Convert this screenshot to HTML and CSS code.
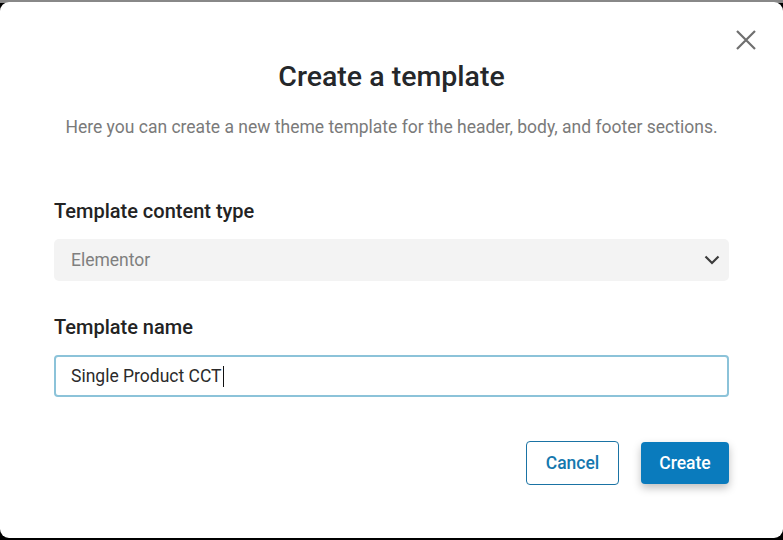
FILE: index.html
```html
<!DOCTYPE html>
<html>
<head>
<meta charset="utf-8">
<title>Create a template</title>
<link rel="stylesheet" href="styles.css">
</head>
<body>
<div class="modal">
  <button class="modal__close" aria-label="Close">
    <svg width="20" height="20" viewBox="0 0 20 20"><path d="M1 1L19 19M19 1L1 19" stroke="#6f6f6f" stroke-width="2.2" fill="none"/></svg>
  </button>
  <h1 class="modal__title">Create a template</h1>
  <p class="modal__text">Here you can create a new theme template for the header, body, and footer sections.</p>

  <div class="field">
    <label class="field__label">Template content type</label>
    <div class="select">
      <span>Elementor</span>
      <svg width="16" height="10" viewBox="0 0 16 10"><path d="M1.5 1.5L8 8L14.5 1.5" stroke="#3c3c3c" stroke-width="2.2" fill="none"/></svg>
    </div>
  </div>

  <div class="field">
    <label class="field__label">Template name</label>
    <div class="input"><span>Single Product CCT</span><i class="caret"></i></div>
  </div>

  <div class="modal__actions">
    <button class="btn btn--ghost">Cancel</button>
    <button class="btn btn--primary">Create</button>
  </div>
</div>
</body>
</html>
```

FILE: styles.css
```css
*,
*::before,
*::after {
  box-sizing: border-box;
}

html, body {
  height: 100%;
}

body {
  margin: 0;
  padding-top: 2px;
  background: linear-gradient(#888 0 3px, #000 3px);
  font-family: Roboto, "Liberation Sans", sans-serif;
}

.modal {
  position: relative;
  height: 536px;
  background: #fff;
  border-radius: 9px;
  padding: 0 54px 0 54px;
}

.modal__close {
  position: absolute;
  top: 28px;
  right: 27px;
  border: 0;
  padding: 0;
  background: none;
  line-height: 0;
}

.modal__title {
  margin: 0;
  padding-top: 57px;
  text-align: center;
  font-size: 28.5px;
  line-height: 36px;
  font-weight: 500;
  color: #25272a;
}

.modal__text {
  margin: 21px 0 0;
  text-align: center;
  font-size: 17.5px;
  line-height: 22px;
  color: #7a7a7a;
}

.field {
  margin-top: 61px;
}

.field + .field {
  margin-top: 34px;
}

.field__label {
  display: block;
  font-size: 20px;
  line-height: 24px;
  font-weight: 500;
  color: #232323;
}

.select {
  display: flex;
  align-items: center;
  justify-content: space-between;
  height: 42px;
  margin-top: 16px;
  padding: 0 9px 0 17px;
  background: #f3f3f3;
  border-radius: 5px;
  font-size: 17.5px;
  color: #7f7f7f;
}

.input {
  display: flex;
  align-items: center;
  height: 42px;
  margin-top: 16px;
  padding: 0 15px;
  border: 2px solid #8cc3d9;
  border-radius: 4px;
  font-size: 17.5px;
  color: #2b2b2b;
}

.caret {
  width: 1.5px;
  height: 21px;
  margin-left: 1px;
  background: #111;
}

.modal__actions {
  display: flex;
  justify-content: flex-end;
  align-items: center;
  gap: 22px;
  margin-top: 44px;
}

.btn {
  font-family: inherit;
  font-size: 17.5px;
  font-weight: 500;
  border-radius: 4px;
  cursor: pointer;
}

.btn--ghost {
  width: 93px;
  height: 44px;
  background: #fff;
  color: #1578ae;
  border: 1px solid #1a73a4;
}

.btn--primary {
  width: 88px;
  height: 42px;
  background: #0a7bbd;
  color: #fff;
  border: 0;
  box-shadow: 0 4px 8px rgba(0, 0, 0, 0.25);
}
```
